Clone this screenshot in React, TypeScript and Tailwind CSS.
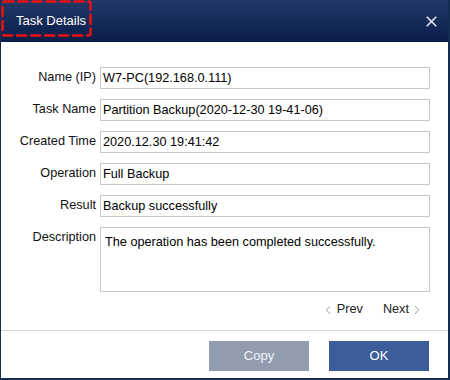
import { X, ChevronLeft, ChevronRight } from "lucide-react";

const fields = [
  { label: "Name (IP)", value: "W7-PC(192.168.0.111)" },
  { label: "Task Name", value: "Partition Backup(2020-12-30 19-41-06)" },
  { label: "Created Time", value: "2020.12.30 19:41:42" },
  { label: "Operation", value: "Full Backup" },
  { label: "Result", value: "Backup successfully" },
];

export default function App() {
  return (
    <div
      className="flex h-[380px] w-[450px] flex-col border-b-2 border-l border-r-2 border-[#0f2d52] bg-white text-[12.7px] text-black"
      style={{ fontFamily: '"Liberation Sans", Arial, sans-serif' }}
    >
      {/* title bar */}
      <div className="relative flex h-[42px] shrink-0 items-center justify-between bg-gradient-to-b from-[#223866] to-[#0b1e4b] pl-[15px] pr-[8px]">
        <span className="text-[13px] text-white">Task Details</span>
        <X className="h-[17px] w-[17px] text-[#dde3ee]" strokeWidth={2.4} />
        <svg className="absolute left-0 top-0" width="92" height="38">
          <rect
            x="1.5"
            y="1.5"
            width="88"
            height="34"
            rx="2"
            fill="none"
            stroke="#ee1111"
            strokeWidth="2.5"
            strokeDasharray="9 5"
            strokeLinecap="round"
          />
        </svg>
      </div>

      {/* form */}
      <div className="flex flex-col gap-[10px] pt-[25px]">
        {fields.map((f) => (
          <div key={f.label} className="flex items-center">
            <div className="w-[99px] pr-[4px] text-right text-[#111]">{f.label}</div>
            <div className="flex h-[22px] w-[330px] items-center border border-[#c9c9c9] pl-[2px] pt-[1px]">
              {f.value}
            </div>
          </div>
        ))}
        <div className="flex items-start">
          <div className="w-[99px] pr-[4px] pt-[1px] text-right text-[#111]">Description</div>
          <div className="h-[65px] w-[330px] border border-[#c9c9c9] pl-[4px] pt-[5px]">
            The operation has been completed successfully.
          </div>
        </div>
      </div>

      {/* pager */}
      <div className="flex justify-end gap-[20px] pr-[24px] pt-[8px] text-[#222]">
        <span className="flex items-center gap-[2px]">
          <ChevronLeft className="h-[14px] w-[14px] text-[#888]" strokeWidth={1.5} />
          Prev
        </span>
        <span className="flex items-center gap-[1px]">
          Next
          <ChevronRight className="h-[14px] w-[14px] text-[#888]" strokeWidth={1.5} />
        </span>
      </div>

      {/* footer */}
      <div className="mt-[11px] border-t border-[#d4d4d4]">
        <div className="flex justify-end gap-[20px] pr-[19px] pt-[10px]">
          <button className="h-[30px] w-[100px] bg-[#919daf] text-[13px] text-[#f2f4f8]">Copy</button>
          <button className="h-[30px] w-[100px] bg-[#3b5e9b] text-[13px] text-white">OK</button>
        </div>
      </div>
    </div>
  );
}
